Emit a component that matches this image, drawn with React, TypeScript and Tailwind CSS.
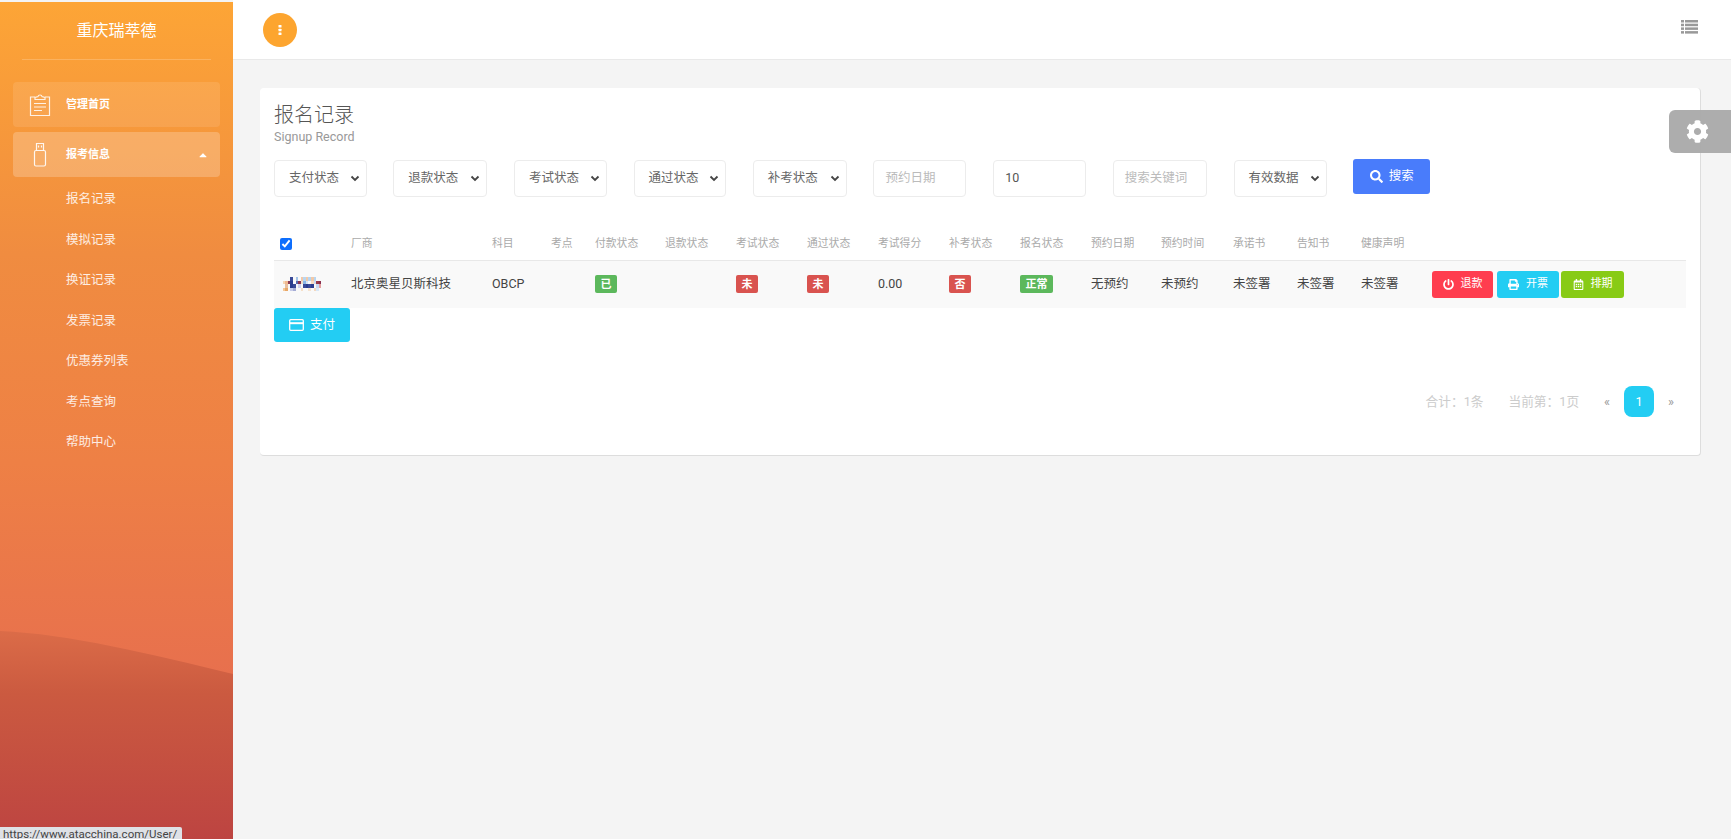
import React from "react";
import { FaPowerOff, FaPrint, FaRegCalendarAlt, FaSearch, FaCog, FaCaretUp } from "react-icons/fa";

const font = "font-['Roboto','Noto_Sans_CJK_SC',sans-serif]";

const Clipboard = () => (
  <svg width="24" height="26" viewBox="0 0 24 26" fill="none" stroke="#fff" strokeOpacity="0.85" strokeWidth="1.2">
    <path d="M7 5H2.5v18.5h19V5H17" />
    <path d="M7 7.5V5.5L10 4.5C10.3 2.5 13.7 2.5 14 4.5L17 5.5V7.5Z" />
    <path d="M6 11.5h12M6 15h12M6 18.5h8" />
  </svg>
);

const Usb = () => (
  <svg width="16" height="26" viewBox="0 0 16 26" fill="none" stroke="#fff" strokeOpacity="0.9" strokeWidth="1.2">
    <rect x="2.5" y="8.5" width="11" height="15.5" rx="1.5" />
    <path d="M4.5 8.5V1.5h7v7" />
    <path d="M6.5 3.5v2M9.5 3.5v2" />
  </svg>
);

const ListIcon = () => (
  <svg width="17" height="14" viewBox="0 0 17 14" fill="#999">
    <rect x="0" y="0" width="3" height="2.5" /><rect x="4" y="0" width="13" height="2.5" />
    <rect x="0" y="3.7" width="3" height="2.5" /><rect x="4" y="3.7" width="13" height="2.5" />
    <rect x="0" y="7.4" width="3" height="2.5" /><rect x="4" y="7.4" width="13" height="2.5" />
    <rect x="0" y="11.1" width="3" height="2.5" /><rect x="4" y="11.1" width="13" height="2.5" />
  </svg>
);

const Dots = () => (
  <svg width="4" height="10" viewBox="0 0 4 10" fill="#fff">
    <rect x="0.5" y="0" width="3" height="2.6" rx="0.6" />
    <rect x="0.5" y="3.7" width="3" height="2.6" rx="0.6" />
    <rect x="0.5" y="7.4" width="3" height="2.6" rx="0.6" />
  </svg>
);

const CardIcon = () => (
  <svg width="15" height="12" viewBox="0 0 15 12" fill="none" stroke="#fff" strokeWidth="1.3">
    <rect x="0.7" y="0.7" width="13.6" height="10.6" rx="1" />
    <path d="M0.7 4.2h13.6" strokeWidth="2" />
  </svg>
);

const Logo = () => {
  const cells: [number, number, string][] = [
    [1,1,"#f6d7b5"],[2,1,"#f0b890"],[2,2,"#e8c0a0"],[1,3,"#f4c89a"],[2,3,"#e8a868"],[3,1,"#8a3a55"],
    [4,0,"#3a4a98"],[4,1,"#2a3d8f"],[4,2,"#2a3d8f"],[5,2,"#3a4a98"],[4,3,"#c8cce8"],[5,3,"#a5acd5"],
    [6,0,"#a5c5e8"],[6,1,"#5a6ab0"],[7,1,"#8a3550"],[7,2,"#d0d4ee"],[8,0,"#f3c8a8"],[8,1,"#f1dcc8"],
    [9,0,"#b7d6f2"],[9,1,"#89b7e6"],[9,2,"#3a4a98"],[10,2,"#2a3d8f"],[11,2,"#3a4a98"],[12,2,"#2a3d8f"],
    [10,0,"#f1c9a8"],[11,0,"#b7d6f2"],[12,0,"#f1c9a8"],[13,0,"#b7d6f2"],[10,1,"#d8e4f4"],[12,1,"#f6dcc4"],
    [13,1,"#c8d8f0"],[14,1,"#9a3a4a"],[15,1,"#8a3050"],[14,2,"#c8d8f0"],[15,2,"#e6a0a0"],[8,3,"#f6e0c8"],[11,3,"#f6e4d0"],[13,3,"#f3d8c0"],[14,3,"#d8e8f8"]
  ];
  return (
    <svg className="blur-[0.5px]" width="44" height="14" viewBox="0 0 17 4" preserveAspectRatio="none" shapeRendering="crispEdges">
      {cells.map(([x, y, c], i) => <rect key={i} x={x} y={y} width="1" height="1" fill={c} />)}
    </svg>
  );
};

const subs = ["报名记录", "模拟记录", "换证记录", "发票记录", "优惠券列表", "考点查询", "帮助中心"];

const Sidebar = () => (
  <aside className="relative w-[233px] shrink-0 mt-[2px] bg-[linear-gradient(to_bottom,#fda536_0%,#f08c40_30%,#ee8045_55%,#e76f4e_82%,#e76f4e_100%)] overflow-hidden">
    <svg className="absolute left-0 top-[628px]" width="233" height="209" viewBox="0 0 233 209" preserveAspectRatio="none">
      <defs>
        <linearGradient id="hill" x1="0" y1="0" x2="0" y2="1">
          <stop offset="0" stopColor="#db6c48" />
          <stop offset="0.3" stopColor="#cb5a40" />
          <stop offset="1" stopColor="#bd4441" />
        </linearGradient>
      </defs>
      <path d="M0 1C70 4 150 24 233 44V209H0Z" fill="url(#hill)" />
    </svg>
    <div className="relative">
      <div className="h-[58px] mx-[22px] border-b border-white/20 flex items-center justify-center text-[16px] text-white">重庆瑞萃德</div>
      <nav className="mt-[22px] px-[13px] flex flex-col gap-[5px]">
        <div className="h-[45px] rounded-[4px] bg-white/10 flex items-center text-white text-[11px] font-bold">
          <span className="w-[53px] flex justify-center pl-[1px]"><Clipboard /></span>
          <span className="pt-[1px]">管理首页</span>
        </div>
        <div className="h-[45px] rounded-[4px] bg-white/[0.22] flex items-center text-white text-[11px] font-bold">
          <span className="w-[53px] flex justify-center"><Usb /></span>
          <span className="flex-1 pt-[1px]">报考信息</span>
          <FaCaretUp className="w-[12px] h-[12px] mr-[11px]" />
        </div>
      </nav>
      <ul className="mt-[2px] flex flex-col">
        {subs.map((s) => (
          <li key={s} className="h-[40.6px] flex items-center pl-[66px] text-[12.5px] text-white/85">{s}</li>
        ))}
      </ul>
    </div>
  </aside>
);

const Sel = ({ label, w }: { label: string; w: string }) => (
  <div className={`${w} h-[37px] rounded-[4px] border border-[#ececec] flex items-center pl-[14px] pr-[6px] justify-between text-[12.5px] text-[#666]`}>
    <span>{label}</span>
    <svg width="10" height="7" viewBox="0 0 10 7" fill="none" stroke="#444" strokeWidth="1.8"><path d="M1.5 1.5 5 5l3.5-3.5" /></svg>
  </div>
);

const Inp = ({ label, w, ph = true }: { label: string; w: string; ph?: boolean }) => (
  <div className={`${w} h-[37px] rounded-[4px] border border-[#ececec] flex items-center pl-[11px] text-[12.5px] ${ph ? "text-[#bbb]" : "text-[#555]"}`}>{label}</div>
);

const Badge = ({ c, t }: { c: string; t: string }) => (
  <span className={`${c} inline-flex items-center justify-center h-[18px] px-[5.5px] rounded-[2px] text-white text-[11px] font-bold leading-none`}>{t}</span>
);

const widths = [77, 141, 59, 44, 70, 71, 71, 71, 71, 71, 71, 70, 72, 64, 64, 71];
const heads = ["", "厂商", "科目", "考点", "付款状态", "退款状态", "考试状态", "通过状态", "考试得分", "补考状态", "报名状态", "预约日期", "预约时间", "承诺书", "告知书", "健康声明", ""];

const Th = ({ t, i }: { t: string; i: number }) => (
  <th className="text-left font-normal text-[10.8px] text-[#aaa] pb-[7px] pl-0 align-bottom">
    {i === 0 ? <input type="checkbox" defaultChecked readOnly className="ml-[6px] w-[12px] h-[12px] align-middle accent-[#0d6efd]" /> : t}
  </th>
);

const Td = ({ children, cn = "" }: { children?: React.ReactNode; cn?: string }) => (
  <td className={`p-0 align-middle ${cn}`}>{children}</td>
);

const Action = ({ c, w, icon, t }: { c: string; w: string; icon: React.ReactNode; t: string }) => (
  <span className={`${c} ${w} h-[27px] rounded-[3px] inline-flex items-center justify-center gap-[7px] text-white text-[11px]`}>
    {icon}{t}
  </span>
);

export default function App() {
  return (
    <div className={`${font} relative flex h-[839px] w-[1731px] overflow-hidden bg-[#f4f4f4]`}>
      <Sidebar />
      <main className="flex-1 min-w-0 flex flex-col">
        <header className="h-[60px] shrink-0 bg-white border-b border-[#e9e9e9] flex items-center justify-between pl-[30px] pr-[33px]">
          <span className="mt-[1px] w-[34px] h-[34px] rounded-full bg-[#fda52f] flex items-center justify-center">
            <Dots />
          </span>
          <span className="-mt-[5px]"><ListIcon /></span>
        </header>
        <section className="ml-[27px] mr-[30px] mt-[28px] h-[368px] bg-white rounded-[4px] border-r border-b border-[#ddd] px-[14px] pt-[14px]">
          <h1 className="text-[20px] leading-[27px] font-light text-[#555]">报名记录</h1>
          <p className="text-[12.5px] leading-[15px] text-[#999]">Signup Record</p>
          <div className="mt-[16px] flex items-start gap-[26.7px] -mb-[1px]">
            <Sel label="支付状态" w="w-[92.5px]" />
            <Sel label="退款状态" w="w-[94px]" />
            <Sel label="考试状态" w="w-[93px]" />
            <Sel label="通过状态" w="w-[92.5px]" />
            <Sel label="补考状态" w="w-[94px]" />
            <Inp label="预约日期" w="w-[93px]" />
            <Inp label="10" w="w-[93px]" ph={false} />
            <Inp label="搜索关键词" w="w-[94px]" />
            <Sel label="有效数据" w="w-[93px]" />
            <button className="-mt-[1px] w-[77px] h-[35px] rounded-[3px] bg-[#497cfb] text-white text-[12.5px] flex items-center justify-center gap-[6px]">
              <FaSearch className="w-[13px] h-[13px]" />搜索
            </button>
          </div>
          <table className="mt-[33px] w-full table-fixed border-collapse">
            <colgroup>{widths.map((w, i) => <col key={i} style={{ width: w }} />)}<col /></colgroup>
            <thead>
              <tr className="h-[31px] border-b border-[#e8e8e8]">{heads.map((h, i) => <Th key={i} t={h} i={i} />)}</tr>
            </thead>
            <tbody>
              <tr className="h-[48px] bg-[#f9f9f9] text-[12.5px] text-[#444]">
                <Td cn="pl-[6px]"><Logo /></Td>
                <Td>北京奥星贝斯科技</Td>
                <Td>OBCP</Td>
                <Td />
                <Td><Badge c="bg-[#5cb85c]" t="已" /></Td>
                <Td />
                <Td><Badge c="bg-[#d9534f]" t="未" /></Td>
                <Td><Badge c="bg-[#d9534f]" t="未" /></Td>
                <Td>0.00</Td>
                <Td><Badge c="bg-[#d9534f]" t="否" /></Td>
                <Td><Badge c="bg-[#5cb85c]" t="正常" /></Td>
                <Td>无预约</Td>
                <Td>未预约</Td>
                <Td>未签署</Td>
                <Td>未签署</Td>
                <Td>未签署</Td>
                <Td>
                  <div className="flex items-center">
                    <Action c="bg-[#ff3d4f]" w="w-[61px]" icon={<FaPowerOff className="w-[11px] h-[11px]" />} t="退款" />
                    <span className="w-[4px]" />
                    <Action c="bg-[#23cdf3]" w="w-[62px]" icon={<FaPrint className="w-[11px] h-[11px]" />} t="开票" />
                    <span className="w-[2px]" />
                    <Action c="bg-[#88cb16]" w="w-[63px]" icon={<FaRegCalendarAlt className="w-[11px] h-[11px]" />} t="排期" />
                  </div>
                </Td>
              </tr>
            </tbody>
          </table>
          <button className="w-[76px] h-[34px] rounded-[3px] bg-[#23cdf3] text-white text-[12.5px] flex items-center justify-center gap-[6px]">
            <CardIcon />支付
          </button>
          <div className="mt-[44px] flex items-center justify-end text-[12.7px] text-[#ccc] pr-[12px]">
            <span>合计：1条</span>
            <span className="ml-[25px]">当前第：1页</span>
            <span className="ml-[25px] text-[#999]">«</span>
            <span className="ml-[14px] w-[30px] h-[31px] rounded-[8px] bg-[#23cdf3] text-white flex items-center justify-center">1</span>
            <span className="ml-[14px] text-[#999]">»</span>
          </div>
        </section>
      </main>
      <div className="absolute right-0 top-[110px] w-[62px] h-[43px] rounded-l-[6px] bg-[#a9a9a9]/95 flex items-center justify-start pl-[17px] text-white">
        <FaCog className="w-[23px] h-[23px]" />
      </div>
      <div className="absolute left-0 bottom-0 w-[182px] h-[12px] overflow-hidden rounded-tr-[2px] bg-[#dee1e6] pl-[3px] text-[11.5px] leading-[15px] text-[#444] whitespace-nowrap font-['Roboto',sans-serif]">https://www.atacchina.com/User/</div>
    </div>
  );
}
